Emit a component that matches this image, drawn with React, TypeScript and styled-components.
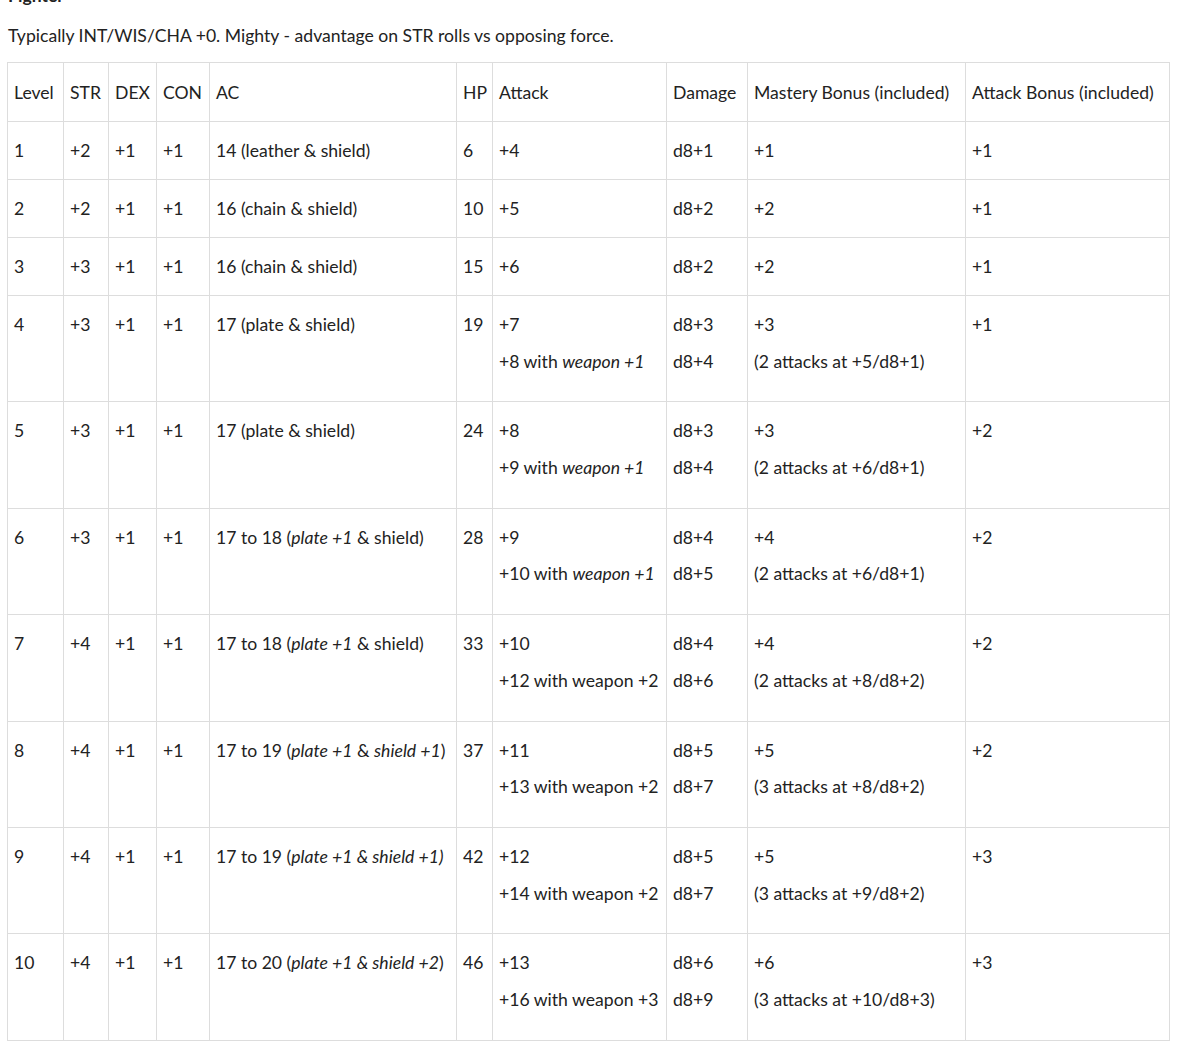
import React from "react";
import styled, { createGlobalStyle } from "styled-components";

const GlobalStyle = createGlobalStyle`
  body {
    margin: 0;
    background: #fff;
    color: #222;
    font-family: Lato, "Liberation Sans", sans-serif;
    font-size: 17.6px;
  }
`;

const Page = styled.div`
  padding: 0 9px 0 7px;
`;

const Heading = styled.h3`
  margin: -16px 0 15px 1px;
  font-size: 17.6px;
  line-height: 24px;
  font-weight: 700;
`;

const Intro = styled.p`
  margin: 0 0 13px 1px;
  line-height: 26px;
`;

const Table = styled.table`
  border-collapse: collapse;
  table-layout: fixed;
  width: 1162px;
`;

const Cell = styled.td`
  border: 1px solid #ddd;
  padding: 16px 6px;
  line-height: 25px;
  vertical-align: top;
  text-align: left;
  white-space: nowrap;
`;

const HeadCell = styled(Cell).attrs({ as: "th" })`
  font-weight: 400;
  padding: 16.5px 6px;
`;

const Line = styled.p`
  margin: 0 0 11.7px;
`;

const widths = [56, 45, 48, 53, 247, 36, 174, 81, 218, 204];
const headers = [
  "Level",
  "STR",
  "DEX",
  "CON",
  "AC",
  "HP",
  "Attack",
  "Damage",
  "Mastery Bonus (included)",
  "Attack Bonus (included)",
];

type Row = {
  level: number;
  str: string;
  ac: React.ReactNode;
  hp: number;
  attack: React.ReactNode[];
  damage: string[];
  mastery: string[];
  bonus: string;
};

const plate = (a: string) => (
  <>
    {a} (<i>plate +1</i> &amp; shield)
  </>
);

const rows: Row[] = [
  { level: 1, str: "+2", ac: "14 (leather & shield)", hp: 6, attack: ["+4"], damage: ["d8+1"], mastery: ["+1"], bonus: "+1" },
  { level: 2, str: "+2", ac: "16 (chain & shield)", hp: 10, attack: ["+5"], damage: ["d8+2"], mastery: ["+2"], bonus: "+1" },
  { level: 3, str: "+3", ac: "16 (chain & shield)", hp: 15, attack: ["+6"], damage: ["d8+2"], mastery: ["+2"], bonus: "+1" },
  {
    level: 4, str: "+3", ac: "17 (plate & shield)", hp: 19,
    attack: ["+7", <>+8 with <i>weapon +1</i></>],
    damage: ["d8+3", "d8+4"], mastery: ["+3", "(2 attacks at +5/d8+1)"], bonus: "+1",
  },
  {
    level: 5, str: "+3", ac: "17 (plate & shield)", hp: 24,
    attack: ["+8", <>+9 with <i>weapon +1</i></>],
    damage: ["d8+3", "d8+4"], mastery: ["+3", "(2 attacks at +6/d8+1)"], bonus: "+2",
  },
  {
    level: 6, str: "+3", ac: plate("17 to 18"), hp: 28,
    attack: ["+9", <>+10 with <i>weapon +1</i></>],
    damage: ["d8+4", "d8+5"], mastery: ["+4", "(2 attacks at +6/d8+1)"], bonus: "+2",
  },
  {
    level: 7, str: "+4", ac: plate("17 to 18"), hp: 33,
    attack: ["+10", "+12 with weapon +2"],
    damage: ["d8+4", "d8+6"], mastery: ["+4", "(2 attacks at +8/d8+2)"], bonus: "+2",
  },
  {
    level: 8, str: "+4",
    ac: <>17 to 19 (<i>plate +1</i> &amp; <i>shield +1</i>)</>,
    hp: 37, attack: ["+11", "+13 with weapon +2"],
    damage: ["d8+5", "d8+7"], mastery: ["+5", "(3 attacks at +8/d8+2)"], bonus: "+2",
  },
  {
    level: 9, str: "+4",
    ac: <>17 to 19 (<i>plate +1 &amp; shield +1)</i></>,
    hp: 42, attack: ["+12", "+14 with weapon +2"],
    damage: ["d8+5", "d8+7"], mastery: ["+5", "(3 attacks at +9/d8+2)"], bonus: "+3",
  },
  {
    level: 10, str: "+4",
    ac: <>17 to 20 (<i>plate +1 &amp; shield +2</i>)</>,
    hp: 46, attack: ["+13", "+16 with weapon +3"],
    damage: ["d8+6", "d8+9"], mastery: ["+6", "(3 attacks at +10/d8+3)"], bonus: "+3",
  },
];

function Lines({ items }: { items: React.ReactNode[] }) {
  if (items.length === 1) return <>{items[0]}</>;
  return (
    <>
      {items.map((it, i) => (
        <Line key={i}>{it}</Line>
      ))}
    </>
  );
}

export default function App() {
  return (
    <Page>
      <GlobalStyle />
      <Heading>Fighter</Heading>
      <Intro>
        Typically INT/WIS/CHA +0. Mighty - advantage on STR rolls vs opposing
        force.
      </Intro>
      <Table>
        <colgroup>
          {widths.map((w, i) => (
            <col key={i} style={{ width: w }} />
          ))}
        </colgroup>
        <thead>
          <tr>
            {headers.map(h => (
              <HeadCell key={h}>{h}</HeadCell>
            ))}
          </tr>
        </thead>
        <tbody>
          {rows.map(r => (
            <tr key={r.level}>
              <Cell>{r.level}</Cell>
              <Cell>{r.str}</Cell>
              <Cell>+1</Cell>
              <Cell>+1</Cell>
              <Cell>{r.ac}</Cell>
              <Cell>{r.hp}</Cell>
              <Cell>
                <Lines items={r.attack} />
              </Cell>
              <Cell>
                <Lines items={r.damage} />
              </Cell>
              <Cell>
                <Lines items={r.mastery} />
              </Cell>
              <Cell>{r.bonus}</Cell>
            </tr>
          ))}
        </tbody>
      </Table>
    </Page>
  );
}
